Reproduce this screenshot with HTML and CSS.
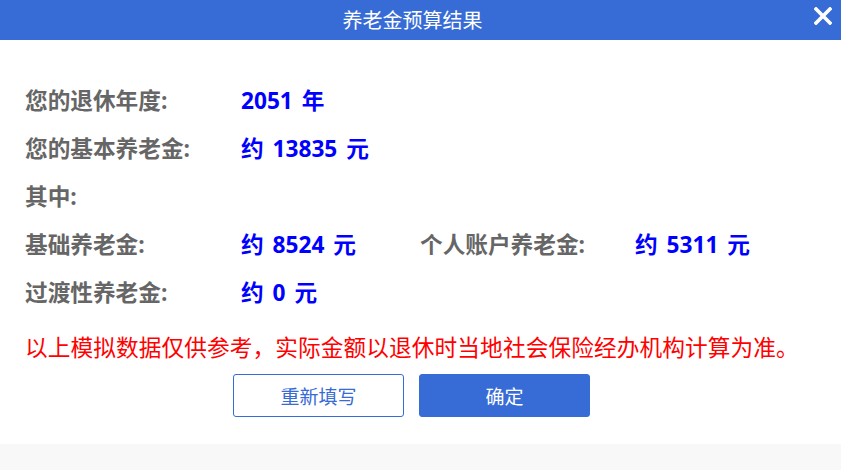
FILE: index.html
```html
<!DOCTYPE html>
<html lang="zh-CN">
<head>
<meta charset="utf-8">
<title>养老金预算结果</title>
<link rel="stylesheet" href="styles.css">
</head>
<body>
<div class="dialog">
  <div class="header">
    <span class="title">养老金预算结果</span>
    <span class="close" aria-label="关闭">
      <svg width="18" height="18" viewBox="0 0 18 18"><path d="M2 2 L16 16 M16 2 L2 16" stroke="#fff" stroke-width="3.6" stroke-linecap="square" fill="none"/></svg>
    </span>
  </div>
  <div class="body">
    <div class="grid">
      <div class="label">您的退休年度:</div>
      <div class="value span3">2051 年</div>

      <div class="label">您的基本养老金:</div>
      <div class="value span3">约 13835 元</div>

      <div class="label span4">其中:</div>

      <div class="label">基础养老金:</div>
      <div class="value">约 8524 元</div>
      <div class="label">个人账户养老金:</div>
      <div class="value">约 5311 元</div>

      <div class="label">过渡性养老金:</div>
      <div class="value span3">约 0 元</div>
    </div>
    <p class="notice">以上模拟数据仅供参考，实际金额以退休时当地社会保险经办机构计算为准。</p>
    <div class="actions">
      <button class="btn btn-outline" type="button">重新填写</button>
      <button class="btn btn-primary" type="button">确定</button>
    </div>
  </div>
  <div class="footer"></div>
</div>
</body>
</html>
```

FILE: styles.css
```css
html, body {
  margin: 0;
  padding: 0;
  background: #ffffff;
}
body {
  font-family: "Open Sans", "Noto Sans CJK SC", sans-serif;
  width: 841px;
  height: 470px;
  overflow: hidden;
}
.dialog {
  display: flex;
  flex-direction: column;
  height: 470px;
}
.header {
  height: 40px;
  background: #376bd6;
  display: flex;
  align-items: center;
  justify-content: center;
  position: relative;
}
.title {
  color: #ffffff;
  font-family: "Noto Sans CJK SC", sans-serif;
  font-size: 20px;
  line-height: 40px;
  margin-left: -16px;
}
.close {
  position: absolute;
  right: 9px;
  top: 7px;
  width: 18px;
  height: 18px;
  display: block;
}
.close svg { display: block; }
.body {
  flex: 1;
  padding: 37px 0 0 25px;
}
.grid {
  display: grid;
  grid-template-columns: 216px 179px 215px auto;
  grid-auto-rows: 48px;
  align-items: center;
}
.label {
  font-size: 22.67px;
  font-weight: 700;
  color: #666666;
  line-height: 48px;
  white-space: nowrap;
}
.value {
  font-size: 22.67px;
  font-weight: 700;
  color: #0000ff;
  line-height: 48px;
  white-space: nowrap;
  word-spacing: 3px;
}
.span3 { grid-column: span 3; }
.span4 { grid-column: span 4; }
.notice {
  margin: 6px 0 0 0;
  color: #ff0000;
  font-family: "Noto Sans CJK SC", sans-serif;
  font-size: 22.67px;
  letter-spacing: 0.1px;
  line-height: 48px;
  white-space: nowrap;
}
.actions {
  display: flex;
  gap: 15px;
  margin: 3px 0 0 208px;
}
.btn {
  width: 171px;
  height: 43px;
  border-radius: 3px;
  font-family: "Noto Sans CJK SC", sans-serif;
  font-size: 19px;
  padding: 0;
  cursor: pointer;
}
.btn-outline {
  background: #ffffff;
  color: #376bd6;
  border: 1px solid #376bd6;
}
.btn-primary {
  background: #376bd6;
  color: #ffffff;
  border: 1px solid #376bd6;
}
.footer {
  height: 26px;
  background: #f8f8f8;
}
```
